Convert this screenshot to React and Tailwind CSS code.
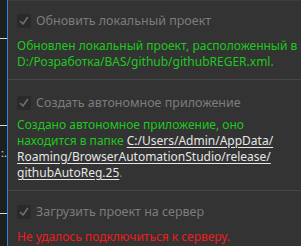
import React from 'react';

const CheckRow = ({ label }) => (
  <div className="flex items-center gap-[5px] h-[14px]">
    <div className="w-[14px] h-[14px] bg-[#2a2a2a] flex items-center justify-center shrink-0">
      <svg width="10" height="10" viewBox="0 0 10 10" fill="none">
        <path d="M1.5 5.5 L4 8 L8.5 1.5" stroke="#6e6e6e" strokeWidth="1.6" strokeLinecap="round" strokeLinejoin="round" />
      </svg>
    </div>
    <span className="text-[#7c7c7c] text-[12.5px] whitespace-nowrap">{label}</span>
  </div>
);

const Link = ({ children }) => (
  <span className="text-[#e6e6e6] underline underline-offset-2">{children}</span>
);

export default function App() {
  return (
    <div
      className="w-[301px] h-[246px] overflow-hidden flex bg-[#333333] text-[12px] leading-[16px]"
      style={{ fontFamily: '"Noto Sans", "DejaVu Sans", sans-serif' }}
    >
      {/* left pane edge */}
      <div className="w-[7px] shrink-0 bg-[#1e1e1e] flex flex-col">
        <div className="h-[38px]" />
        <div className="h-px bg-[#d8d8d8]" />
        <div className="h-[86px]" />
        <div className="h-px bg-[#d8d8d8]" />
        <div className="h-[22px]" />
        <div className="h-[10px] text-[#e0e0e0] text-[11px] leading-[10px] text-right overflow-hidden whitespace-nowrap">:.</div>
        <div className="h-[55px]" />
        <div className="h-px bg-[#d8d8d8]" />
      </div>
      <div className="w-px shrink-0 bg-[#2e86da]" />

      <div className="flex-1 min-w-0 border-t border-[#3d3d3d] flex flex-col">
        <div className="pl-[9px] pt-[13px] pb-[9px] border-b border-[#474747] w-[330px]">
          <CheckRow label="Обновить локальный проект" />
          <div className="mt-[10px] text-[#1ec81e]">
            <div className="whitespace-nowrap">Обновлен локальный проект, расположенный в</div>
            <div className="whitespace-nowrap">D:/Розработка/BAS/github/githubREGER.xml.</div>
          </div>
        </div>

        <div className="pl-[9px] pt-[16px] pb-[9px] border-b border-[#474747] w-[330px]">
          <CheckRow label="Создать автономное приложение" />
          <div className="mt-[7px] text-[#1ec81e]">
            <div className="whitespace-nowrap">Создано автономное приложение, оно</div>
            <div className="whitespace-nowrap">
              находится в папке <Link>C:/Users/Admin/AppData/</Link>
            </div>
            <div className="whitespace-nowrap">
              <Link>Roaming/BrowserAutomationStudio/release/</Link>
            </div>
            <div className="whitespace-nowrap">
              <Link>githubAutoReg.25</Link>.
            </div>
          </div>
        </div>

        <div className="pl-[9px] pt-[14px] w-[330px]">
          <CheckRow label="Загрузить проект на сервер" />
          <div className="mt-[10px] text-[#ee1c1c] whitespace-nowrap">
            Не удалось подключиться к серверу.
          </div>
        </div>
      </div>
    </div>
  );
}
